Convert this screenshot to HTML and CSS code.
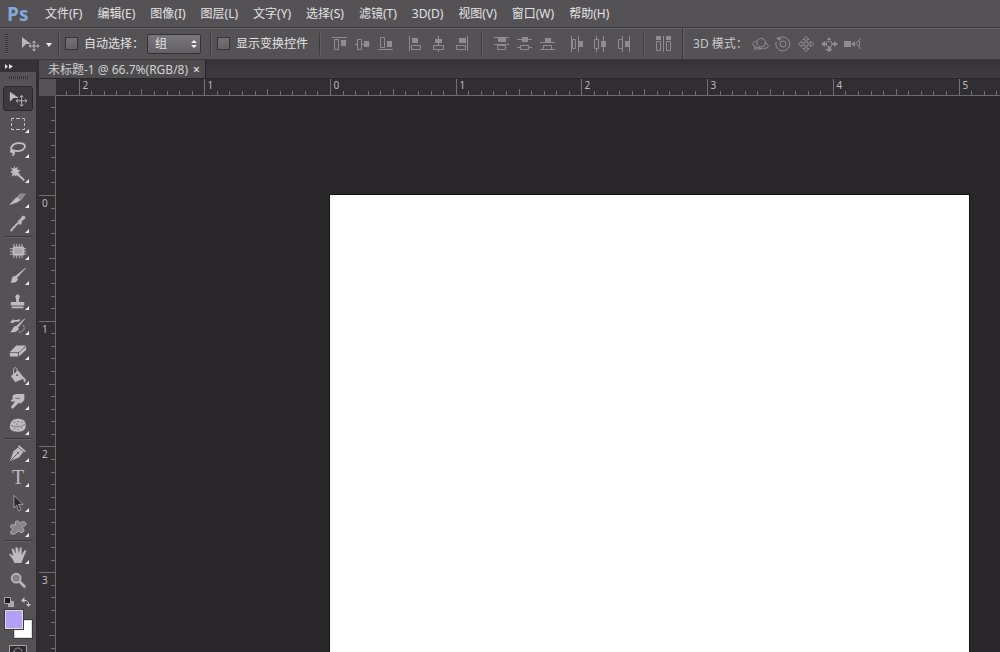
FILE: index.html
```html
<!DOCTYPE html>
<html lang="zh-CN">
<head>
<meta charset="utf-8">
<title>未标题-1</title>
<link rel="stylesheet" href="styles.css">
</head>
<body class="app">
<header class="menubar">
  <span class="logo">Ps</span>
  <nav class="menus">
    <button class="menu">文件(F)</button><button class="menu">编辑(E)</button><button class="menu">图像(I)</button><button class="menu">图层(L)</button><button class="menu">文字(Y)</button><button class="menu">选择(S)</button><button class="menu">滤镜(T)</button><button class="menu">3D(D)</button><button class="menu">视图(V)</button><button class="menu">窗口(W)</button><button class="menu">帮助(H)</button>
  </nav>
</header>

<section class="options">
  <span class="grip-v"></span>
  <button class="preset" aria-label="移动工具预设">
    <svg width="32" height="18" viewBox="0 0 32 18"><path d="M1 2v11l4-4h5z" fill="#b9b8bb"/><path d="M13 6v10M8 11h10M11.500 7.500 13 6l1.500 1.500M11.500 14.500 13 16l1.500-1.500M9.500 9.500 8 11l1.500 1.500M16.500 9.500 18 11l-1.500 1.500" fill="none" stroke="#c4c3c6"/><path d="M25 8h6l-3 4z" fill="#eee"/></svg>
  </button>
  <span class="sep"></span>
  <label class="check"><input type="checkbox" class="box">自动选择：</label>
  <span class="picker"><select class="select" aria-label="自动选择"><option>组</option><option>图层</option></select><svg class="arrows" width="6" height="8" viewBox="0 0 6 8"><path d="M0 3l3-3 3 3zM0 5l3 3 3-3z" fill="#eee"/></svg></span>
  <span class="sep"></span>
  <label class="check"><input type="checkbox" class="box">显示变换控件</label>
  <span class="sep sep-wide"></span>
  <div class="icons">
    <button class="ico" aria-label="顶对齐"><svg viewBox="0 0 15 16"><path class="l" d="M0 1.500h15M2.500 3.500h4v10h-4z"/><path class="f" d="M9 4h5v6H9z"/></svg></button>
    <button class="ico" aria-label="垂直居中对齐"><svg viewBox="0 0 15 16"><path class="l" d="M0 8.500h2M7 8.500h8M2.500 3.500h4v10h-4z"/><path class="f" d="M9 5h5v6H9z"/></svg></button>
    <button class="ico" aria-label="底对齐"><svg viewBox="0 0 15 16"><path class="l" d="M0 13.500h15M2.500 1.500h4v10h-4z"/><path class="f" d="M9 5h5v6H9z"/></svg></button>
  </div>
  <div class="icons">
    <button class="ico" aria-label="左对齐"><svg viewBox="0 0 15 16"><path class="l" d="M1.500 0v15M3.500 9.500h9v4h-9z"/><path class="f" d="M4 2h6v5H4z"/></svg></button>
    <button class="ico" aria-label="水平居中对齐"><svg viewBox="0 0 15 16"><path class="l" d="M7.500 0v9M7.500 14v2M2.500 9.500h10v4h-10z"/><path class="f" d="M4 3h7v4H4z"/></svg></button>
    <button class="ico" aria-label="右对齐"><svg viewBox="0 0 15 16"><path class="l" d="M13.500 0v15M2.500 9.500h9v4h-9z"/><path class="f" d="M5 2h7v5H5z"/></svg></button>
  </div>
  <span class="sep"></span>
  <div class="icons">
    <button class="ico" aria-label="按顶分布"><svg viewBox="0 0 15 16"><path class="l" d="M0 1.500h15M0 8.500h15M3.500 9.500h8v4h-8z"/><path class="f" d="M4 2h8v4H4z"/></svg></button>
    <button class="ico" aria-label="按垂直居中分布"><svg viewBox="0 0 15 16"><path class="l" d="M0 3.500h15M0 11.500h3M12 11.500h3M3.500 9.500h8v4h-8z"/><path class="f" d="M5 1h6v5H5z"/></svg></button>
    <button class="ico" aria-label="按底分布"><svg viewBox="0 0 15 16"><path class="l" d="M0 6.500h15M0 13.500h15M3.500 9.500h8v4h-8z"/><path class="f" d="M5 2h6v4H5z"/></svg></button>
  </div>
  <div class="icons">
    <button class="ico" aria-label="按左分布"><svg viewBox="0 0 15 16"><path class="l" d="M1.500 0v16M8.500 0v16M2.500 3.500h3v9h-3z"/><path class="f" d="M9 5h4v6H9z"/></svg></button>
    <button class="ico" aria-label="按水平居中分布"><svg viewBox="0 0 15 16"><path class="l" d="M3.500 0v3M3.500 13v3M10.500 0v16M1.500 3.500h4v9h-4z"/><path class="f" d="M8 5h5v6H8z"/></svg></button>
    <button class="ico" aria-label="按右分布"><svg viewBox="0 0 15 16"><path class="l" d="M6.500 0v16M13.500 0v16M2.500 3.500h4v9h-4z"/><path class="f" d="M9 5h4v6H9z"/></svg></button>
  </div>
  <span class="sep"></span>
  <div class="icons icons-single">
    <button class="ico" aria-label="自动对齐图层"><svg viewBox="0 0 15 16"><path class="l" d="M7.500 0v16M.5 5.500h4v9h-4zM10.500 5.500h4v9h-4z"/><path class="f" d="M0 0h5v4H0zM10 0h5v4h-5z"/></svg></button>
  </div>
  <span class="sep sep-full"></span>
  <span class="mode">3D 模式：</span>
  <div class="icons icons-3d">
    <button class="ico" aria-label="旋转 3D 对象"><svg viewBox="0 0 17 16"><path class="l" d="M5 8C4 4 8 1 11 3c3 1 3 4 2 6-2 3-7 2-8-1M5 5C2 5 0 7 1 9c2 3 9 4 14 3 3-2 0-5-3-5M3 11l-1 2h7l-2-2"/></svg></button>
    <button class="ico" aria-label="滚动 3D 对象"><svg viewBox="0 0 17 16"><circle class="l" cx="8" cy="8" r="3"/><path class="l" d="M4 2a7 7 0 1 1-3 4"/><path class="f" d="M1 2l5-1-1 4z"/></svg></button>
    <button class="ico" aria-label="拖动 3D 对象"><svg viewBox="0 0 17 16"><path class="l" d="M8 .5l3 3H9v3.500h3.500V5l3 3-3 3V9H9v3.500h2l-3 3-3-3h2V9H3.500v2l-3-3 3-3v2H7V3.500H5z"/></svg></button>
    <button class="ico" aria-label="滑动 3D 对象"><svg viewBox="0 0 17 16"><circle class="l" cx="8" cy="8" r="3"/><path class="f" d="M8 1l2 3H6zM0 8l4-3v2h2v2H4v2zM17 8l-4-3v2h-2v2h2v2zM7 11h3v2h2l-4 3-4-3h3z"/></svg></button>
    <button class="ico" aria-label="缩放 3D 对象"><svg viewBox="0 0 17 16"><path class="f" d="M0 5h7v6H0zM7 8l4-3v6z"/><path class="l" d="M17 2l-5 5.500 5 5.500M15.500 5v5"/></svg></button>
  </div>
</section>

<div class="workspace">
  <aside class="toolbox">
    <button class="expand" aria-label="展开面板"><svg width="8" height="5" viewBox="0 0 8 5"><path d="M0 0l3 2.500L0 5zM4 0l4 2.500L4 5z" fill="#ddd"/></svg></button>
    <span class="grip-h"></span>
    <div class="tools">
      <button class="tool active" aria-label="移动"><svg viewBox="0 0 20 20"><path class="g" d="M1 2v11l4-4h6z"/><path class="s" d="M14 6v12M8 12h12M12 8l2-2 2 2M12 16l2 2 2-2M10 10l-2 2 2 2M18 10l2 2-2 2"/></svg></button>
      <button class="tool more" aria-label="矩形选框"><svg viewBox="0 0 18 18"><path class="s" d="M2.500 6V3.500H5M7 3.500h4M13 3.500h2.500V6M15.500 8v3M15.500 13v1.500H13M11 14.500H7M5 14.500H2.500V13M2.500 11V8"/></svg></button>
      <button class="tool more" aria-label="套索"><svg viewBox="0 0 20 20"><path class="s w" d="M4 12C0 9 4 4 10 3.500s9 2 7 5.500S9 13 5 11.500c-3-1-4 2-1 2s1 2 0 4"/></svg></button>
      <button class="tool more" aria-label="魔棒"><svg viewBox="0 0 20 20"><path class="g" d="M6 1l1 3 3-2-1 3 4 1-3 2 3 3-4-1-1 3-2-2-3 2 1-4-3-1 3-2-2-3 3 1z"/><path class="s w" d="M9 10l8 7"/></svg></button>
      <button class="tool more" aria-label="裁剪切片"><svg viewBox="0 0 20 20"><path d="M10 8l4-4h5l-5 7z" fill="#8b898d"/><path class="g" d="M0 17l8-9 5 3-4 3z"/><path class="s" d="M13 4l-4 5 4 2"/></svg></button>
      <button class="tool more" aria-label="吸管"><svg viewBox="0 0 20 20"><path class="g" d="M10 6l2-1 3-4c2-1 4 1 3 3l-4 3v3l-2 1z"/><path class="s w" d="M11 8l-7 7-2 3"/></svg></button>
      <hr class="rule">
      <button class="tool more" aria-label="修补"><svg viewBox="0 0 20 20"><rect class="g" x="4" y="5" width="13" height="10" rx="2"/><path class="s" d="M5.500 2v16M8.500 2v16M11.500 2v16M14.500 2v16M1 7.500h18M1 10.500h18M1 13.500h18"/><rect x="6" y="7" width="9" height="6" fill="#a8a6aa"/></svg></button>
      <button class="tool more" aria-label="画笔"><svg viewBox="0 0 20 20"><path class="g" d="M19 1L9 12l-2-2 11-9zM7 10l3 3c-1 5-6 5-9 4 2-1 2-2 2-4 1-3 3-3 4-3z"/></svg></button>
      <button class="tool more" aria-label="仿制图章"><svg viewBox="0 0 20 20"><path class="g" d="M8 8C4 1 15 1 11 8v3h6v4H2v-4h6zM3 16h13v2H3z"/></svg></button>
      <button class="tool more" aria-label="历史记录画笔"><svg viewBox="0 0 20 20"><path class="g" d="M18 2l-8 10-2-2 9-8zM8 10l3 3c-2 4-6 4-10 4 4-3 3-7 7-7zM1 6l4-4v5z"/><path class="s w" d="M4 5c3-2 5 1 8-2"/><path class="s" d="M16 9c3 5-2 8-6 8" stroke-dasharray="2 1"/></svg></button>
      <button class="tool more" aria-label="橡皮擦"><svg viewBox="0 0 20 20"><path class="g" d="M8 4h11l-8 7H1zM1 12h9v4H1zM11 12l8-7v4l-8 7z"/></svg></button>
      <button class="tool more" aria-label="油漆桶"><svg viewBox="0 0 20 20"><path class="g" d="M2 10l8-6 6 7c3 2 3 4 2 6-2 0-2-2-2-4l-9 4z"/><path class="s" d="M5 10V3c0-3 4-3 4 0v4"/><circle cx="9" cy="9" r="1" fill="#333"/></svg></button>
      <button class="tool more" aria-label="涂抹"><svg viewBox="0 0 20 20"><path class="g" d="M4 4c4-3 8-1 13-2v7l-4 4-2-1-7 7-2-2 5-7-4 1-1-2 2-1z"/><path d="M7 7h5" stroke="#69676b"/></svg></button>
      <button class="tool more" aria-label="海绵"><svg viewBox="0 0 20 20"><path class="g" d="M2 6c2-5 14-6 16 0 1 3 1 7-2 9-4 2-11 2-14-1-2-2-1-5 0-8z"/><path d="M2 9c4 3 11 2 16-1M5 6h2M9 5h2M13 6h2M8 8h2M5 13h2M9 14h2M13 12h2" stroke="#747276" fill="none"/></svg></button>
      <hr class="rule">
      <button class="tool more" aria-label="钢笔"><svg viewBox="0 0 20 20"><path class="g" d="M11 1l8 7-2 1-7-6zM10 4l6 5-5 6-10 4 4-11z"/><path d="M2 18l7-7" stroke="#555357"/><circle cx="10" cy="10" r="1" fill="#444"/></svg></button>
      <button class="tool more" aria-label="横排文字"><span class="glyph">T</span></button>
      <button class="tool more" aria-label="路径选择"><svg viewBox="0 0 20 20"><path d="M5.500 1.500v14l3-3 2 6 3-1-3-6h5z" fill="#29272a" stroke="#aaa8ac"/></svg></button>
      <button class="tool more" aria-label="自定形状"><svg viewBox="0 0 20 20"><path d="M7 4c0-3 5-2 5 1 3-3 6-2 7 0 0 3-3 3-4 4 1 3 3 4 0 6-3 0-3-1-5-2-2 4-6 5-8 3-1-3 2-3 2-5-4-2-3-6 3-4z" fill="#858387" stroke="#bcbabd"/></svg></button>
      <hr class="rule">
      <button class="tool more" aria-label="抓手"><svg viewBox="0 0 20 20"><path class="g" d="M6 19C5 15 1 11 0 9c1-1 3 1 5 2L3 4c1-2 2-1 3 1l2 4-1-7c1-1 2-1 3 0l1 7 1-7c1-1 3 0 2 1v7l3-5c1-1 3 0 2 1l-3 7c-1 3-2 4-2 6z"/></svg></button>
      <button class="tool" aria-label="缩放"><svg viewBox="0 0 20 20"><circle cx="8" cy="8" r="5" fill="#858387" stroke="#b9b7ba" stroke-width="2"/><path d="M12 12l6 6" stroke="#b9b7ba" stroke-width="3"/></svg></button>
    </div>
    <div class="swap">
      <button class="mini" aria-label="默认颜色"><svg width="10" height="10" viewBox="0 0 10 10"><path d="M4 4h6v6H4z" fill="#aaa"/><path d="M.5.5h6v6h-6z" fill="#1b1a1c" stroke="#aaa"/></svg></button>
      <button class="mini" aria-label="切换颜色"><svg width="10" height="10" viewBox="0 0 10 10"><path d="M2 3.500h3.500l2 2V8" fill="none" stroke="#c5c3c6"/><path d="M0 3.500L3.500 0v6zM5 7h5L7.500 10z" fill="#c5c3c6"/></svg></button>
    </div>
    <div class="colors">
      <button class="swatch fore" aria-label="前景色"></button>
      <button class="swatch back" aria-label="背景色"></button>
    </div>
    <button class="mask" aria-label="快速蒙版"><svg width="18" height="12" viewBox="0 0 18 12"><path d="M.5.5h17v11H.5z" fill="#2f2d30" stroke="#a5a3a7"/><circle cx="9" cy="7" r="4" fill="none" stroke="#ccc" stroke-dasharray="2 1"/></svg></button>
  </aside>

  <main class="document">
    <div class="tabs"><div class="tab"><span>未标题-1 @ 66.7%(RGB/8)</span><button class="close" aria-label="关闭">×</button></div></div>
    <div class="stage">
      <span class="corner"></span>
      <svg class="ruler ruler-x"></svg>
      <svg class="ruler ruler-y"></svg>
      <div class="canvas"><div class="page"></div></div>
    </div>
  </main>
</div>
<script src="rulers.js"></script>
</body>
</html>
```
FILE: rulers.js
```js
const INCH = 125.7;
const NS = "http://www.w3.org/2000/svg";

// Fills a ruler with tenth-of-an-inch ticks and a number at each inch.
function drawRuler(svg, origin, vertical) {
  const box = svg.getBoundingClientRect();
  const length = vertical ? box.height : box.width;
  let d = "";
  for (let i = Math.ceil(-origin * 10 / INCH); origin + i * INCH / 10 < length; i++) {
    const p = Math.round(origin + i * INCH / 10) + 0.5;
    const size = i % 10 === 0 ? 16 : i % 5 === 0 ? 6 : 4;
    d += vertical ? `M${16 - size} ${p}H16` : `M${p} ${16 - size}V16`;
    if (i % 10 === 0) {
      const label = document.createElementNS(NS, "text");
      label.setAttribute("x", vertical ? 3 : p + 3);
      label.setAttribute("y", vertical ? p + 11 : 10);
      label.textContent = Math.abs(i / 10);
      svg.append(label);
    }
  }
  const path = document.createElementNS(NS, "path");
  path.setAttribute("d", d);
  svg.prepend(path);
}

drawRuler(document.querySelector(".ruler-x"), 274, false);
drawRuler(document.querySelector(".ruler-y"), 99, true);
```
FILE: styles.css
```css
* { box-sizing: border-box; }

.app {
  display: flex;
  flex-direction: column;
  height: 100vh;
  margin: 0;
  overflow: hidden;
  background: #2a282a;
  color: #e4e3e5;
  font: 12px/16px "Noto Sans", "Noto Sans CJK SC", sans-serif;
}

button, select, input { margin: 0; padding: 0; border: 0; background: none; color: inherit; font: inherit; }
svg { display: block; }

.menubar { display: flex; align-items: center; flex: none; height: 27px; padding-left: 7px; background: #545255; }
.logo { width: 38px; color: #7fa9d8; font: bold 19px/24px "Open Sans", "Noto Sans", sans-serif; }
.menus { display: flex; gap: 15px; }
.menu { white-space: nowrap; }

.options {
  display: flex;
  align-items: center;
  flex: none;
  height: 33px;
  padding-left: 5px;
  border-top: 1px solid #39373a;
  border-bottom: 1px solid #39373a;
  background: #545255;
  box-shadow: inset 0 1px #6a686b;
  white-space: nowrap;
}
.grip-v { width: 3px; height: 20px; background: repeating-linear-gradient(#343235 0 1px, #5c5a5d 1px 2px); }
.preset { margin-left: 13px; }
.sep { width: 2px; height: 22px; margin: 0 5px; border-left: 1px solid #3b393c; border-right: 1px solid #636164; }
.check { display: flex; align-items: center; gap: 6px; }
.box { appearance: none; width: 13px; height: 13px; border: 1px solid #353336; background: linear-gradient(#737175, #656367); }
.picker { display: grid; align-items: center; width: 54px; margin: 0 4px 0 3px; }
.select { grid-area: 1 / 1; appearance: none; height: 20px; padding-left: 7px; border: 1px solid #333134; border-radius: 2px; background: linear-gradient(#79777b, #626064); }
.arrows { grid-area: 1 / 1; justify-self: end; margin-right: 4px; pointer-events: none; }
.sep-wide { margin: 0 11px; }
.icons { display: flex; gap: 8px; margin-right: 15px; }
.ico svg { width: 15px; height: 16px; }
.icons + .sep { margin: 0 11px 0 -3px; }
.icons-single { margin-right: 14px; }
.icons + .sep-full { height: 31px; margin-right: 9px; }
.l { fill: none; stroke: #8f8d91; }
.f { fill: #8f8d91; }
.mode { margin-right: 4px; color: #c9c8ca; }
.icons-3d { gap: 6px; }
.icons-3d svg { width: 17px; }

.workspace { display: flex; flex: 1; min-height: 0; }

.toolbox { display: flex; flex-direction: column; flex: none; width: 39px; border-right: 3px solid #2f2d30; background: #545255; }
.expand { flex: none; height: 12px; padding-left: 5px; background: #343235; }
.grip-h { flex: none; width: 19px; height: 3px; margin: 4px 0 7px 9px; background: repeating-linear-gradient(90deg, #333134 0 1px, #5c5a5d 1px 2px); }
.tools { display: flex; flex-direction: column; flex: none; }
.tool { display: flex; align-items: center; position: relative; height: 25px; padding-left: 5px; margin: 0 3px; border: 1px solid transparent; border-radius: 3px; }
.tool svg { width: 18px; height: 18px; }
.active { border-color: #29272a; background: #3c3a3d; }
.more::after { content: ""; position: absolute; right: 3px; bottom: 2px; border: 2px solid; border-color: transparent #eee #eee transparent; }
.rule { width: 29px; height: 2px; margin: 0 auto; border: 0; border-top: 1px solid #39373a; border-bottom: 1px solid #605e61; }
.g { fill: #bebcc0; }
.s { fill: none; stroke: #c2c0c4; }
.w { stroke-width: 2; }
.glyph { width: 18px; color: #bebcc0; font: 20px/23px "Liberation Serif", serif; text-align: center; }
.swap { display: flex; flex: none; justify-content: space-between; height: 17px; padding: 2px 5px 0 4px; }
.colors { display: grid; grid-template-columns: 9px 9px 9px; grid-template-rows: 10px 9px 9px; flex: none; margin: 1px 0 7px 5px; }
.swatch { border: 1px solid #ddd; outline: 1px solid #3b393c; background: #fff; }
.fore { z-index: 1; grid-area: 1 / 1 / 3 / 3; background: #b39ff5; }
.back { grid-area: 2 / 2 / 4 / 4; }
.mask { flex: none; margin-left: 9px; width: 18px; }

.document { display: flex; flex-direction: column; flex: 1; min-width: 0; }
.tabs { display: flex; flex: none; height: 19px; background: linear-gradient(#343235, #3d3b3e); border-bottom: 1px solid #29272a; }
.tab { display: flex; align-items: center; gap: 5px; padding: 2px 5px 0 9px; border-right: 1px solid #29272a; background: #4d4b4e; color: #d2d1d3; white-space: nowrap; }
.close { color: #eee; }
.stage { display: grid; grid-template-columns: 17px 1fr; grid-template-rows: 17px 1fr; flex: 1; min-height: 0; }
.corner { background: #555356; }
.ruler { width: 100%; height: 100%; background: #302e31; color: #737175; min-height: 0; }
.ruler-x { border-bottom: 1px solid #6c6a6e; }
.ruler-y { border-right: 1px solid #6c6a6e; }
.ruler path { fill: none; stroke: #737175; }
.ruler text { fill: #bdbbbf; font: 10px "Noto Sans", sans-serif; }
.canvas { min-height: 0; overflow: hidden; padding: 99px 31px 0 274px; background: #2a282a; }
.page { height: 100%; background: #fff; outline: 1px solid #121113; }
```
